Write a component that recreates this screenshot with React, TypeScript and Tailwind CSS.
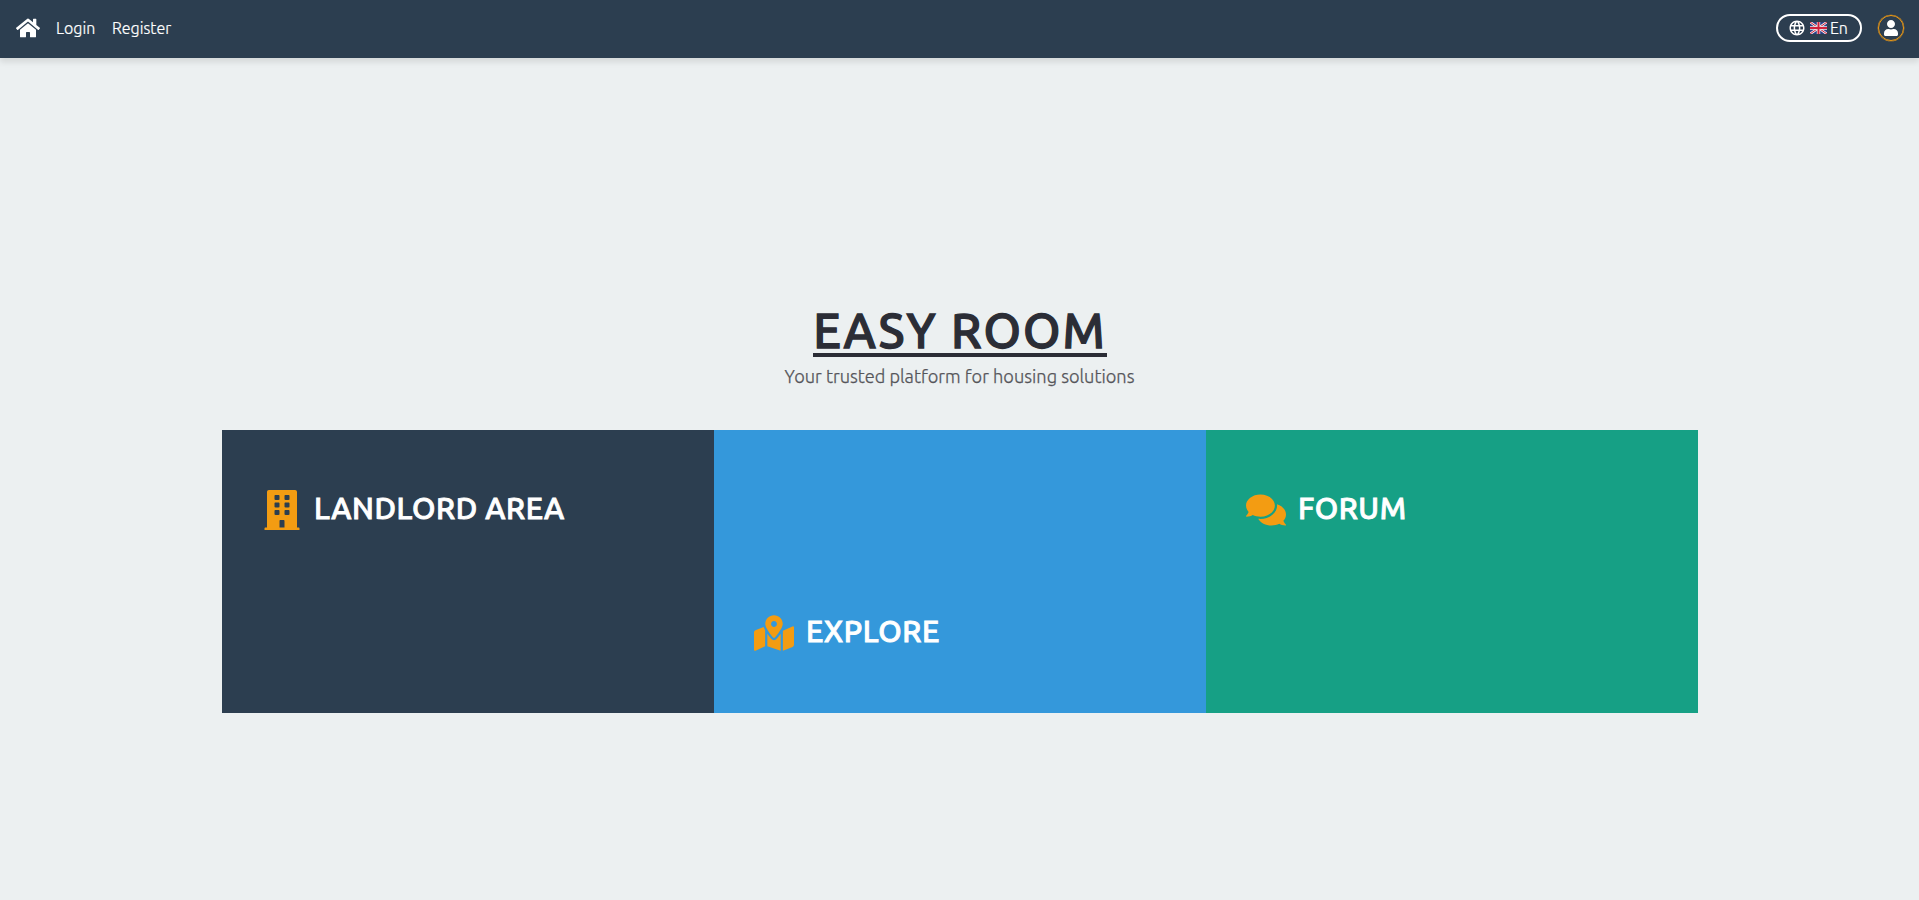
import { FaHome, FaUser, FaBuilding, FaMapMarkedAlt, FaComments } from "react-icons/fa";
import { MdLanguage } from "react-icons/md";

function UkFlag() {
  return (
    <svg viewBox="0 0 60 42" className="h-3 w-[17px]" aria-hidden="true">
      <rect width="60" height="42" fill="#2b3f87" />
      <path d="M0 0L60 42M60 0L0 42" stroke="#eeeeee" strokeWidth="9" />
      <path d="M0 0L60 42M60 0L0 42" stroke="#d0203c" strokeWidth="3.5" />
      <path d="M30 0V42M0 21H60" stroke="#eeeeee" strokeWidth="12" />
      <path d="M30 0V42M0 21H60" stroke="#d0203c" strokeWidth="7" />
    </svg>
  );
}

export default function App() {
  return (
    <div className="flex h-[900px] flex-col overflow-hidden bg-[#ecf0f1] font-['Ubuntu','Noto_Sans',sans-serif]">
      <header className="flex h-[58px] shrink-0 items-center justify-between bg-[#2c3e50] pr-[15px] pl-4 text-white shadow-[0_4px_6px_rgba(0,0,0,0.1)]">
        <nav className="flex items-center gap-4 pb-[3px] text-base font-light [-webkit-text-stroke:0.2px_currentColor]">
          <a href="#"><FaHome className="size-6" /></a>
          <a href="#" className="w-10">Login</a>
          <a href="#">Register</a>
        </nav>
        <div className="flex items-center gap-4 pb-[3px]">
          <button className="mt-px flex h-7 w-[86px] items-center rounded-full border-2 border-white pl-2.5 text-base font-light">
            <MdLanguage className="mr-1 size-[18px] shrink-0" />
            <UkFlag />
            <span className="ml-[3px] [-webkit-text-stroke:0.2px_currentColor]">En</span>
          </button>
          <span className="flex size-[26px] items-center justify-center rounded-full border border-[#f39c12] shadow-[0_0_0_0.3px_#f39c12]">
            <FaUser className="size-4" />
          </span>
        </div>
      </header>
      <main className="flex flex-col items-center pt-[244px]">
        <h1 className="flex h-[55px] w-[294px] items-center justify-center border-b-4 border-[#2b2d36] pt-[5px] pl-px text-[48px] leading-[55px] font-medium tracking-[2.1px] whitespace-nowrap text-[#2b2d36] [-webkit-text-stroke:1.3px_currentColor]">EASY ROOM</h1>
        <p className="mt-[5px] text-[18.24px] leading-7 font-light whitespace-nowrap text-[#55555a] [-webkit-text-stroke:0.25px_currentColor]">Your trusted platform for housing solutions</p>
        <div className="mt-10 grid h-[283px] w-[1476px] grid-cols-3 text-[30px] font-medium tracking-[0.57px] text-white [-webkit-text-stroke:0.9px_currentColor]">
          <a href="#" className="flex items-start gap-[12.5px] bg-[#2c3e50] pt-[60px] pl-10">
            <FaBuilding className="size-10 text-[#f39c12]" />
            <span className="leading-9">LANDLORD AREA</span>
          </a>
          <a href="#" className="flex items-end gap-[12.5px] bg-[#3498db] pb-[60px] pl-10">
            <FaMapMarkedAlt className="size-10 text-[#f39c12]" />
            <span className="mb-1 leading-9">EXPLORE</span>
          </a>
          <a href="#" className="flex items-start gap-[12.5px] bg-[#16a085] pt-[60px] pl-10">
            <FaComments className="size-10 text-[#f39c12]" />
            <span className="leading-9">FORUM</span>
          </a>
        </div>
      </main>
    </div>
  );
}
